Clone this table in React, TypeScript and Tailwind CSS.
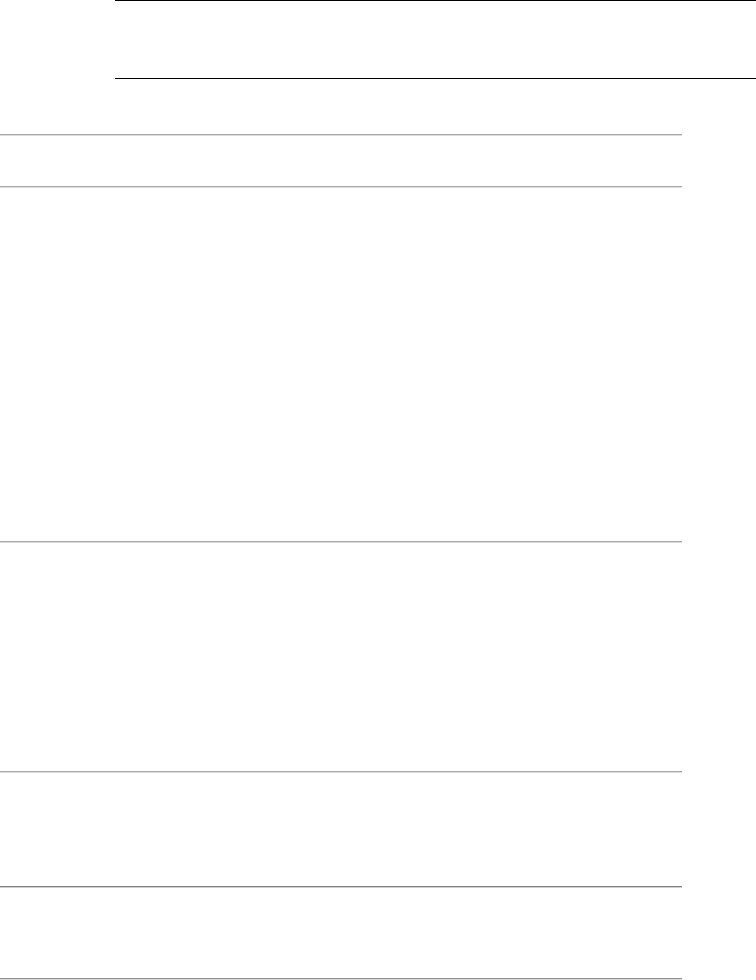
export default function App() {
  const rules = [
    { gap: 'mt-[55px]', tone: 'border-t-[#a8a8a8] border-b-[#dcdcdc]' },
    { gap: 'mt-[50px]', tone: 'border-t-[#a8a8a8] border-b-[#dcdcdc]' },
    { gap: 'mt-[353px]', tone: 'border-t-[#a8a8a8] border-b-[#dcdcdc]' },
    { gap: 'mt-[228px]', tone: 'border-t-[#a8a8a8] border-b-[#dcdcdc]' },
    { gap: 'mt-[113px]', tone: 'border-t-[#808080] border-b-[#d0d0d0]' },
    { gap: 'mt-[90px]', tone: 'border-t-[#909090] border-b-[#d8d8d8]' },
  ];

  return (
    <div className="w-[756px] h-[980px] bg-white overflow-hidden flex flex-col">
      {/* header band */}
      <div className="ml-[115px] h-[79px] border-t border-b border-black shrink-0" />

      {/* section rules */}
      {rules.map((r, i) => (
        <div key={i} className={`${r.gap} w-[682px] h-[2px] border-t border-b shrink-0 ${r.tone}`} />
      ))}
    </div>
  );
}
